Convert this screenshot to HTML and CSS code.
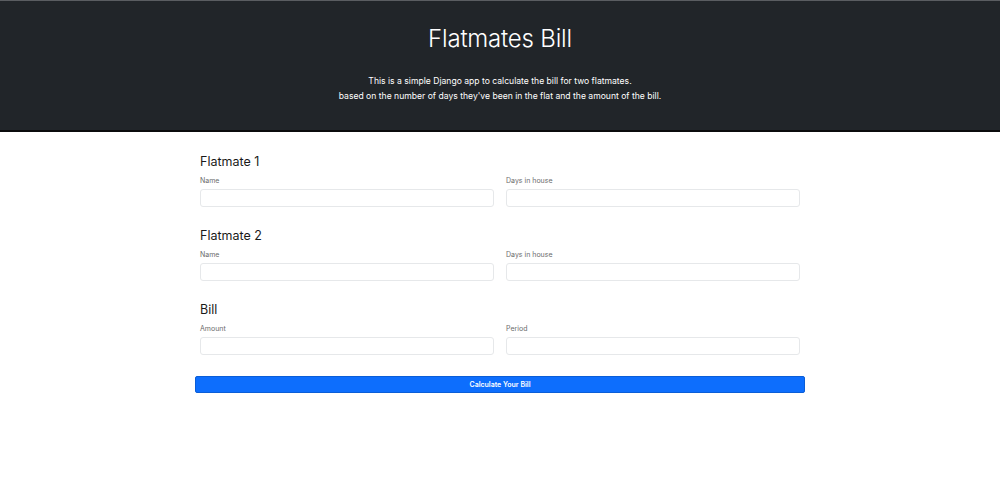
FILE: index.html
```html
<!DOCTYPE html>
<html>
<head>
<meta charset="utf-8">
<link rel="stylesheet" href="styles.css">
</head>
<body>
<header class="hero">
  <h1 class="hero-title">Flatmates Bill</h1>
  <p class="hero-text">This is a simple Django app to calculate the bill for two flatmates.<br>based on the number of days they've been in the flat and the amount of the bill.</p>
</header>
<main class="container">
  <form class="bill-form">
    <section class="group">
      <h2 class="group-title">Flatmate 1</h2>
      <div class="row">
        <label class="field"><span class="label">Name</span><input class="input" type="text"></label>
        <label class="field"><span class="label">Days in house</span><input class="input" type="text"></label>
      </div>
    </section>
    <section class="group">
      <h2 class="group-title">Flatmate 2</h2>
      <div class="row">
        <label class="field"><span class="label">Name</span><input class="input" type="text"></label>
        <label class="field"><span class="label">Days in house</span><input class="input" type="text"></label>
      </div>
    </section>
    <section class="group group-last">
      <h2 class="group-title">Bill</h2>
      <div class="row">
        <label class="field"><span class="label">Amount</span><input class="input" type="text"></label>
        <label class="field"><span class="label">Period</span><input class="input" type="text"></label>
      </div>
    </section>
    <button class="btn" type="button">Calculate Your Bill</button>
  </form>
</main>
</body>
</html>
```
FILE: styles.css
```css
* { box-sizing: border-box; }
body {
  margin: 0;
  font-family: "Inter", "Liberation Sans", sans-serif;
  color: #212529;
  background: #fff;
}
.hero {
  background: #212529;
  border-top: 1px solid #5a5d61;
  border-bottom: 2px solid #0b0c0d;
  height: 132px;
  text-align: center;
  color: #fff;
  padding-top: 22px;
}
.hero-title {
  margin: 0;
  font-size: 24px;
  font-weight: 300;
  line-height: 31px;
  letter-spacing: -0.2px;
}
.hero-text {
  margin: 20px 0 0;
  font-size: 8.6px;
  line-height: 15px;
  font-weight: 400;
}
.container {
  width: 610px;
  margin: 0 auto;
}
.bill-form {
  display: flex;
  flex-direction: column;
  padding-top: 21px;
}
.group {
  padding: 0 5px;
  margin-bottom: 20px;
}
.group-last {
  margin-bottom: 21px;
}
.group-title {
  margin: 0;
  font-size: 12.5px;
  font-weight: 400;
  line-height: 18px;
  color: #1a1a1a;
}
.row {
  display: grid;
  grid-template-columns: 1fr 1fr;
  gap: 12px;
  margin-top: 5px;
}
.field {
  display: flex;
  flex-direction: column;
}
.label {
  font-size: 7px;
  line-height: 10px;
  color: #6b6b6b;
  margin-bottom: 3px;
}
.input {
  height: 18px;
  border: 1px solid #e6e8ea;
  border-radius: 3px;
  background: #fff;
  padding: 0 6px;
  margin: 0;
  font: inherit;
}
.btn {
  height: 17px;
  width: 100%;
  background: #0d6efd;
  border: 1px solid #0b5ed7;
  border-radius: 2px;
  color: #fff;
  font-family: "Inter", "Liberation Sans", sans-serif;
  font-size: 7px;
  font-weight: 600;
  padding: 0;
}
```
